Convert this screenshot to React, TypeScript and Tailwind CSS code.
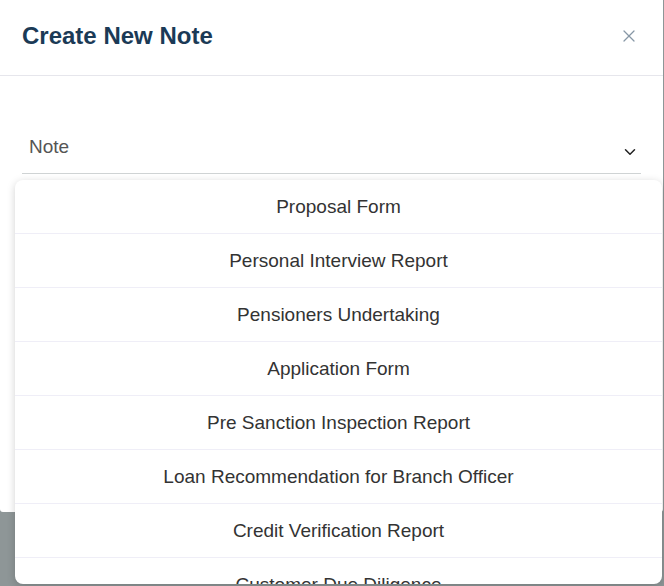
import { X, ChevronDown } from 'lucide-react';

const options = [
  'Proposal Form',
  'Personal Interview Report',
  'Pensioners Undertaking',
  'Application Form',
  'Pre Sanction Inspection Report',
  'Loan Recommendation for Branch Officer',
  'Credit Verification Report',
  'Customer Due Diligence',
  'Sanction Letter',
];

export default function App() {
  return (
    <div
      className="relative h-[586px] w-[664px] overflow-hidden bg-[#8e9697]"
      style={{ fontFamily: '"Liberation Sans", Arial, sans-serif' }}
    >
      {/* Modal */}
      <div className="h-[512px] w-[663px] rounded-b-[3px] bg-white">
        <div className="flex h-[76px] items-center justify-between border-b border-[#e6e6ec] pb-[4px] pl-[22px] pr-[24px]">
          <h2 className="text-[24px] font-bold text-[#1b3a56]">Create New Note</h2>
          <button type="button" className="text-[#8797a6]">
            <X className="h-[20px] w-[20px]" strokeWidth={1.5} />
          </button>
        </div>

        <div className="px-[22px] pt-[57px]">
          <div className="flex h-[41px] items-start justify-between border-b border-[#cfd3d4] pl-[7px] pr-[2px]">
            <span className="pt-[1px] text-[19px] leading-[26px] text-[#555]">Note</span>
            <ChevronDown className="mt-[10px] h-[18px] w-[18px] text-[#222]" strokeWidth={2} />
          </div>
        </div>
      </div>

      {/* Dropdown menu */}
      <div className="absolute left-[15px] top-[180px] h-[404px] w-[647px] overflow-hidden rounded-[8px] bg-white shadow-[0_2px_8px_rgba(0,0,0,0.18)]">
        {options.map((o) => (
          <div
            key={o}
            className="flex h-[54px] items-center justify-center border-b border-[#efeef7] pt-[1px] text-[19px] text-[#333]"
          >
            {o}
          </div>
        ))}
      </div>
    </div>
  );
}
